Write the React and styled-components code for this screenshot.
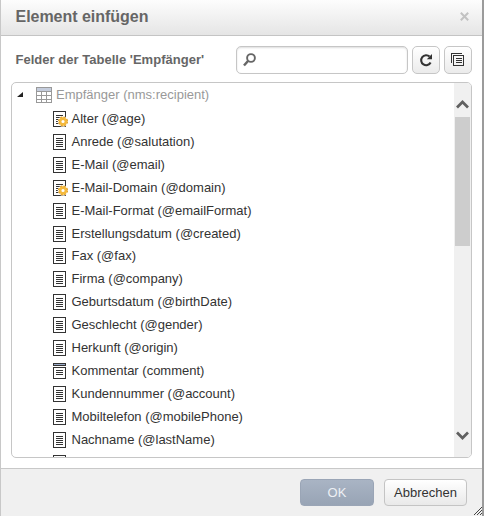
import React from 'react';
import styled, { createGlobalStyle } from 'styled-components';

const GlobalStyle = createGlobalStyle`
  *, *::before, *::after { box-sizing: border-box; }
  html, body { margin: 0; padding: 0; background: #fff; overflow: hidden; }
  button, input { font-family: inherit; }
`;

const Dialog = styled.div`
  position: relative;
  display: flex;
  flex-direction: column;
  width: 484px;
  height: 516px;
  overflow: hidden;
  border-left: 1px solid #c8c8c8;
  border-right: 2px solid #9b9b9b;
  background: #fff;
  color: #333;
  font-family: "Liberation Sans", Arial, sans-serif;
`;

const Header = styled.header`
  flex: 0 0 36px;
  display: flex;
  align-items: center;
  justify-content: space-between;
  padding: 0 13px 2px 14.5px;
  border-bottom: 1px solid #c4c4c4;
  background: linear-gradient(#fdfdfd, #e5e5e5);
`;

const Title = styled.h1`
  margin: 0;
  color: #666;
  font-size: 16px;
  line-height: 20px;
  letter-spacing: -0.03px;
`;

const CloseButton = styled.button`
  display: flex;
  padding: 0;
  border: 0;
  background: none;
`;

const Toolbar = styled.div`
  flex: 0 0 46px;
  display: flex;
  align-items: flex-start;
  padding: 10px 6px 0 14.5px;
`;

const Label = styled.div`
  flex: 0 0 220.5px;
  color: #666;
  font-size: 13px;
  font-weight: bold;
  line-height: 27px;
  letter-spacing: 0.02px;
  white-space: nowrap;
`;

const SearchBox = styled.label`
  flex: none;
  display: flex;
  align-items: center;
  width: 172px;
  height: 28px;
  margin-right: 4px;
  padding-left: 6px;
  border: 1px solid #c6c6c6;
  border-radius: 5px;
  box-shadow: inset 0 1px 2px #ddd;
`;

const SearchInput = styled.input`
  flex: 1;
  width: 0;
  min-width: 0;
  border: 0;
  outline: 0;
  background: transparent;
`;

const ToolButton = styled.button`
  flex: none;
  display: flex;
  align-items: center;
  justify-content: center;
  width: 28px;
  height: 28px;
  margin-right: 4px;
  padding: 0;
  border: 1px solid #c6c6c6;
  border-radius: 5px;
  background: linear-gradient(#fff, #ebebeb);
`;

const TreePanel = styled.div`
  flex: 0 0 376px;
  display: flex;
  width: 461px;
  margin-left: 10px;
  border: 1px solid #c6c6c6;
  border-radius: 5px;
  overflow: hidden;
`;

const Tree = styled.div`
  flex: 1;
  overflow: hidden;
`;

const RootRow = styled.div`
  display: flex;
  align-items: center;
  height: 24px;
  padding-left: 5px;
  color: #999;
  font-size: 13px;

  svg + svg { margin: 0 4px 0 12px; }
`;

const RootName = styled.span`
  padding-bottom: 1px;
`;

const FieldRow = styled.div`
  display: flex;
  align-items: center;
  height: ${(p) => (p.$short ? 22 : 23)}px;
  padding: ${(p) => (p.$short ? 0 : 1)}px 0 0 41px;
  color: #333;
  font-size: 13px;
  line-height: 15px;
  white-space: nowrap;

  svg { flex: none; margin-right: 3.5px; }
`;

const FieldName = styled.span`
  padding-bottom: 2px;
`;

const ScrollTrack = styled.div`
  display: flex;
  flex-direction: column;
  align-items: center;
  justify-content: space-between;
  width: 17px;
  background: #f0f0f0;
`;

const ScrollThumb = styled.div`
  width: 15px;
  height: 129px;
  margin-bottom: auto;
  background: #cdcdcd;
`;

const ScrollButton = styled.div`
  display: flex;
  align-items: center;
  justify-content: center;
  width: 15px;
  height: ${(p) => p.$height}px;
  padding-top: ${(p) => p.$inset || 0}px;
`;

const Footer = styled.footer`
  display: flex;
  justify-content: flex-end;
  align-items: flex-start;
  gap: 10px;
  flex: 1;
  margin-top: 10px;
  padding: 10px 15px 0 0;
  border-top: 1px solid #c8c8c8;
  background: #f0f0f0;
`;

const ActionButton = styled.button`
  width: ${(p) => (p.$primary ? 74 : 83)}px;
  height: 27px;
  padding: 0;
  border: 1px solid ${(p) => (p.$primary ? '#9aa5b6' : '#c4c4c4')};
  border-radius: 4px;
  background: ${(p) => (p.$primary ? 'linear-gradient(#a9b4c4, #98a4b5)' : 'linear-gradient(#fff, #e9e9e9)')};
  color: ${(p) => (p.$primary ? '#edf0f4' : '#333')};
  font-size: 13px;
`;

const Grip = styled.svg`
  position: absolute;
  right: 0;
  bottom: 1px;
`;

const CloseIcon = () => (
  <svg width="9" height="9" viewBox="0 0 9 9" stroke="#c2c2c2" strokeWidth="2">
    <path d="M.8 .8 8.2 8.2M8.2 .8.8 8.2" />
  </svg>
);

const SearchIcon = () => (
  <svg width="13" height="14" viewBox="0 0 13 14" fill="none" stroke="#666">
    <circle cx="8" cy="5" r="3.9" strokeWidth="1.9" />
    <path d="M5 8 1 12.5" strokeWidth="2.5" />
  </svg>
);

const RefreshIcon = () => (
  <svg width="14" height="14" viewBox="0 0 14 14" fill="none">
    <path d="M11.6 9.6A5 5 0 1 1 10.6 3.6" stroke="#333" strokeWidth="2.1" />
    <path d="M13 1V6.2H7.8Z" fill="#333" />
  </svg>
);

const CopyIcon = () => (
  <svg width="14" height="14" viewBox="0 0 14 14" fill="none" stroke="#333" shapeRendering="crispEdges">
    <path d="M.5 10V.5H11" />
    <path d="M2.5 2.5h10v10h-10zM5 5.5h6M5 7.5h6M5 9.5h6" />
  </svg>
);

const TableIcon = () => (
  <svg width="16" height="16" viewBox="0 0 16 16" shapeRendering="crispEdges">
    <path fill="#c5cddd" d="M1 1h14v3H1z" />
    <path fill="none" stroke="#999" d="M.5.5h15v15H.5zM1 4.5h14M1 8.5h14M1 12.5h14M5.5 4v11M10.5 4v11" />
  </svg>
);

const Expander = () => (
  <svg width="7" height="6" viewBox="0 0 7 6"><path d="M6 0V5H0Z" fill="#222" /></svg>
);

const FieldIcon = ({ kind }) => (
  <svg width="15" height="16" viewBox="0 0 15 16" fill="none">
    <g stroke="#333" shapeRendering="crispEdges">
      {kind === 'memo' ? (
        <>
          <path fill="#9bacca" d="M.5.5h12v2H.5z" />
          <path d="M.5 4.5h12v11H.5zM3 7.5h7M3 9.5h7M3 11.5h7" />
        </>
      ) : (
        <path d="M.5.5h12v15H.5zM3 4.5h7M3 6.5h7M3 8.5h7M3 10.5h7M3 12.5h7" />
      )}
    </g>
    {kind === 'computed' && (
      <>
        <circle cx="10" cy="10.5" r="5.2" fill="#fff" />
        <circle cx="10" cy="10.5" r="4.3" stroke="#dc971c" strokeWidth="1.4" strokeDasharray="2.1 1.28" />
        <circle cx="10" cy="10.5" r="2.9" stroke="#f4b93c" strokeWidth="2.6" />
      </>
    )}
  </svg>
);

const Chevron = ({ down }) => (
  <svg width="13" height="9" viewBox="0 0 13 9" fill="none" stroke="#606060" strokeWidth="2.7">
    <path d={down ? 'M1 1.5 6.5 7 12 1.5' : 'M1 7.5 6.5 2 12 7.5'} />
  </svg>
);

const fields = [
  { label: 'Alter (@age)', kind: 'computed' },
  { label: 'Anrede (@salutation)' },
  { label: 'E-Mail (@email)' },
  { label: 'E-Mail-Domain (@domain)', kind: 'computed' },
  { label: 'E-Mail-Format (@emailFormat)' },
  { label: 'Erstellungsdatum (@created)' },
  { label: 'Fax (@fax)', short: true },
  { label: 'Firma (@company)' },
  { label: 'Geburtsdatum (@birthDate)' },
  { label: 'Geschlecht (@gender)' },
  { label: 'Herkunft (@origin)' },
  { label: 'Kommentar (comment)', kind: 'memo' },
  { label: 'Kundennummer (@account)' },
  { label: 'Mobiltelefon (@mobilePhone)' },
  { label: 'Nachname (@lastName)' },
  { label: '' },
];

export default function App() {
  return (
    <>
      <GlobalStyle />
      <Dialog role="dialog">
        <Header>
          <Title>Element einfügen</Title>
          <CloseButton><CloseIcon /></CloseButton>
        </Header>
        <Toolbar>
          <Label>Felder der Tabelle 'Empfänger'</Label>
          <SearchBox><SearchIcon /><SearchInput /></SearchBox>
          <ToolButton><RefreshIcon /></ToolButton>
          <ToolButton><CopyIcon /></ToolButton>
        </Toolbar>
        <TreePanel>
          <Tree>
            <RootRow><Expander /><TableIcon /><RootName>Empfänger (nms:recipient)</RootName></RootRow>
            {fields.map((f, i) => (
              <FieldRow key={i} $short={f.short}>
                <FieldIcon kind={f.kind} /><FieldName>{f.label}</FieldName>
              </FieldRow>
            ))}
          </Tree>
          <ScrollTrack>
            <ScrollButton $height={34} $inset={8}><Chevron /></ScrollButton>
            <ScrollThumb />
            <ScrollButton $height={43}><Chevron down /></ScrollButton>
          </ScrollTrack>
        </TreePanel>
        <Footer>
          <ActionButton $primary>OK</ActionButton>
          <ActionButton>Abbrechen</ActionButton>
        </Footer>
        <Grip width="8" height="8" viewBox="0 0 8 8" stroke="#444" strokeWidth="1">
          <path d="M0 8 8 0M3 8 8 3M6 8 8 6" />
        </Grip>
      </Dialog>
    </>
  );
}
